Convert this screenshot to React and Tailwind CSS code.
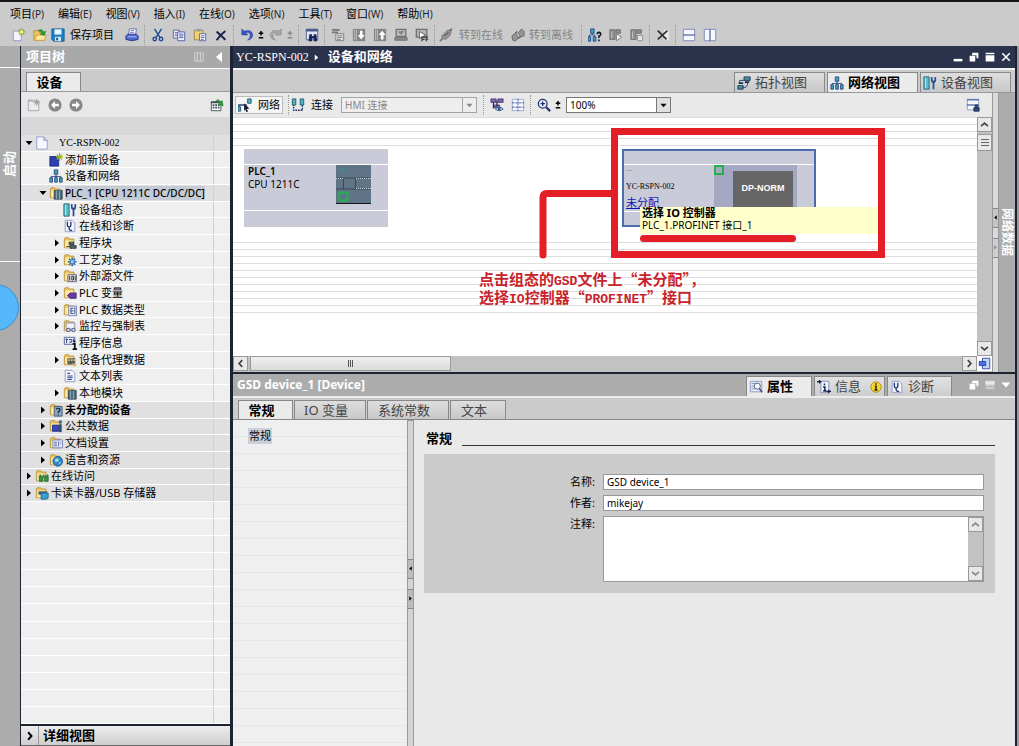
import React, { useState } from 'react';
import clsx from 'clsx';

const Folder = () => (
  <g>
    <path d="M1.5 13.5V3.5l1-1.5h4l1 1.5h5v10z" fill="#e9c25c" stroke="#b8923c" />
    <path d="M2.5 13V5h9v8z" fill="#fbe9a8" />
  </g>
);

const Sheet = () => <path d="M2.5 1.5h8l3 3v10h-11z" fill="#f4f6ff" stroke="#8a96c4" />;

const Scope = () => (
  <path d="M5 3v4q0 2 2 2t2-2V3M7 9v2q0 2 2 2h1.500" fill="none" stroke="#26356b" strokeWidth="1.500" />
);

const glyphs = {
  newProject: (
    <g>
      <path d="M1.500 3.500h9v11h-9z" fill="#f4f6ff" stroke="#8a96c4" />
      <path d="M11 0v9M6.500 4.500h9M8 1.500l6 6M14 1.500l-6 6" stroke="#8fae1d" strokeWidth="1.300" />
      <circle cx="11" cy="4.500" r="1.800" fill="#fff7a0" />
    </g>
  ),
  open: (
    <g>
      <path d="M1 14V3h5l1 2h6v9z" fill="#edc65c" stroke="#c08f2c" />
      <path d="M2 14l2-6h11l-2 6z" fill="#fde9a0" stroke="#c9a040" />
      <path d="M6 3q4-3 6 1.500l2.500-1-1.500 5-5-1.500 2.300-1Q9 3 6 3z" fill="#2c9a3a" stroke="#14702a" strokeWidth=".5" />
    </g>
  ),
  save: (
    <g>
      <path d="M1 1h14v14H3l-2-2z" fill="#1d7fc4" stroke="#155a92" />
      <path d="M4 1.500h8v6H4z" fill="#e9f4fc" />
      <path d="M4.500 10h7v5h-7z" fill="#cfe2f0" />
      <path d="M6 11h2v3H6z" fill="#1a4e80" />
    </g>
  ),
  print: (
    <g>
      <path d="M5 1h8l-1 7H4z" fill="#fff" stroke="#5a68ae" />
      <path d="M6.500 3h4M6 5h4" stroke="#5a68ae" />
      <path d="M1 9l2-2h10l2 2v4q-7 3-14 0z" fill="#4f68d0" stroke="#27398e" />
      <path d="M3 10h10" stroke="#b9c5f6" />
    </g>
  ),
  cut: (
    <g fill="none" stroke="#234a8c" strokeWidth="1.600">
      <path d="M4 1l6 9.500M12 1L6 10.500" />
      <circle cx="4.300" cy="12.500" r="2" />
      <circle cx="11.500" cy="12.500" r="2" />
    </g>
  ),
  copy: (
    <g stroke="#4a59a4">
      <path d="M1.500 2.500h7v9h-7z" fill="#fff" />
      <path d="M6.500 4.500h8v10h-8z" fill="#eef1ff" />
      <path d="M3 5h3M3 7h3M3 9h3M8 7h5M8 9h5M8 11h5" />
    </g>
  ),
  paste: (
    <g>
      <path d="M1.500 2.500h10v11h-10z" fill="#f0d070" stroke="#a5853a" />
      <path d="M4 1h5v3H4z" fill="#99a" />
      <path d="M7.500 6.500h7v8h-7z" fill="#f4f6ff" stroke="#5361a0" />
      <path d="M9 9h4M9 11h4M9 13h3" stroke="#5361a0" />
    </g>
  ),
  remove: <path d="M3 4l10 9.500M13 3.500Q7 8 3 14" fill="none" stroke="#1c2250" strokeWidth="2.300" />,
  undo: <path d="M2 1v7h7L6.500 5.500Q12 4 11.500 9q0 3-3 5 6-1 6-6.500Q13.500 1 4.500 3.500z" fill="#3a55c0" stroke="#223a96" strokeWidth=".5" />,
  redo: <path d="M14 1v7H7l2.500-2.500Q4 4 4.500 9q0 3 3 5-6-1-6-6.500Q2.500 1 11.500 3.500z" fill="#a9a9a9" stroke="#7c7c7c" strokeWidth=".6" />,
  plusminus: <path d="M1 5.500h6M4 2.500v6M1 11.500h6" stroke="currentColor" strokeWidth="2" />,
  find: (
    <g>
      <path d="M1.500 1.500h13v12h-13z" fill="#dfe4f4" stroke="#4d5a8c" />
      <path d="M1 1h14v3H1z" fill="#4d5a8c" />
      <path d="M5 7h3v2h2V7h3l1 8h-4v-3H8v3H4z" fill="#1b2858" />
    </g>
  ),
  compile: (
    <g stroke="#777">
      <path d="M1 2h9M1 5h7" strokeWidth="2" />
      <path d="M5.500 6.500h9v8h-9z" fill="#e0e0e0" />
      <path d="M7 9h6M7 11h6M7 13h4" />
    </g>
  ),
  download: (
    <g>
      <path d="M1 1h14v14H1z" fill="#858585" />
      <path d="M3 2v12M5 2v12" stroke="#c5c5c5" />
      <path d="M9 3h3v5h2.500L10.500 13 6.500 8H9z" fill="#fff" />
    </g>
  ),
  upload: (
    <g>
      <path d="M1 1h14v14H1z" fill="#858585" />
      <path d="M3 2v12M5 2v12" stroke="#c5c5c5" />
      <path d="M9 13h3V8h2.500L10.500 3l-4 5H9z" fill="#fff" />
    </g>
  ),
  simulate: (
    <g>
      <path d="M2.500 1.500h11v8h-11z" fill="#bdbdbd" stroke="#717171" strokeWidth="1.500" />
      <path d="M5 4l3 3 3-4M1 11h14v3H1z" fill="#8a8a8a" stroke="#6b6b6b" />
    </g>
  ),
  runtime: (
    <g>
      <path d="M1.500 1.500h12v9h-12z" fill="#b5b5b5" stroke="#707070" strokeWidth="1.500" />
      <path d="M5 4l7 4-7 4z" fill="#fff" stroke="#555" />
      <path d="M7 10.500h8M8 13h3M12 13h3M8 10v5M13 11v4" stroke="#444" strokeWidth="1.500" />
    </g>
  ),
  plug: (
    <g>
      <path d="M1 15l5-5" stroke="#777" strokeWidth="2" />
      <path d="M3 9l6-6 5-1-1 6-5 5-4-1z" fill="#959595" stroke="#777" />
      <path d="M12 3l3-2M6 9l5-4" stroke="#6a6a6a" strokeWidth="1.500" />
    </g>
  ),
  unplug: (
    <g>
      <path d="M1 9l4-3 4 5-4 4-3-1zM8 6l4-5 3 3v5l-4 1z" fill="#959595" stroke="#686868" />
      <path d="M5 6l2-2M8 12l3-2" stroke="#555" strokeWidth="1.500" />
    </g>
  ),
  accessible: (
    <g>
      <path d="M5 5v3M1.500 11V8h6v3" fill="none" stroke="#2c4c90" />
      <path d="M3 1h4v5H3zM0 10h3v5H0zM6 10h3v5H6z" fill="#3aa6bf" stroke="#24447e" />
      <path d="M10.500 7q0-2 2-2t2 2q0 1.500-2 2.500v2M12.500 13v2" fill="none" stroke="#10162e" strokeWidth="1.800" />
    </g>
  ),
  startCpu: (
    <g>
      <path d="M1 2h6v11H1zM8 2h5v4H8z" fill="#909090" stroke="#6c6c6c" />
      <path d="M8.500 6.500l6 4-6 4z" fill="#f0f0f0" stroke="#777" />
      <path d="M3 4v8" stroke="#c8c8c8" />
    </g>
  ),
  stopCpu: (
    <g>
      <path d="M1 2h6v11H1zM8 2h5v4H8z" fill="#909090" stroke="#6c6c6c" />
      <path d="M8.500 8.500h6v6h-6z" fill="#e4e4e4" stroke="#888" />
      <path d="M3 4v8" stroke="#c8c8c8" />
    </g>
  ),
  crossRef: (
    <g>
      <path d="M9 2h6v12H9z" fill="#e7e7e7" />
      <path d="M2 3l10 10M13 3L2 13" stroke="#333" strokeWidth="2" />
    </g>
  ),
  splitH: (
    <g>
      <path d="M1.500 1.500h13v13h-13z" fill="#f5f7ff" stroke="#7784bb" />
      <path d="M1 8h14" stroke="#5d6ba8" strokeWidth="1.500" />
    </g>
  ),
  splitV: (
    <g>
      <path d="M1.500 1.500h13v13h-13z" fill="#f5f7ff" stroke="#7784bb" />
      <path d="M8 1v14" stroke="#5d6ba8" strokeWidth="1.500" />
    </g>
  ),
  columns: <path d="M2.500 2.500h11v11h-11zM6 3v10M10 3v10" fill="none" stroke="#e2e2e2" />,
  newGrey: (
    <g>
      <path d="M1.500 3.500h12v11h-12z" fill="#ececec" stroke="#a0a0a0" />
      <path d="M1 2.500h6M11 1v8M7 5h8M8.500 2.500l5 5M13.500 2.500l-5 5" stroke="#979797" />
    </g>
  ),
  back: (
    <g>
      <circle cx="8" cy="8" r="7.500" fill="#878787" />
      <path d="M8 3.500L3.500 8 8 12.500V9.500h4.500v-3H8z" fill="#fff" />
    </g>
  ),
  forward: (
    <g>
      <circle cx="8" cy="8" r="7.500" fill="#878787" />
      <path d="M8 3.500L12.500 8 8 12.500V9.500H3.500v-3H8z" fill="#fff" />
    </g>
  ),
  overview: (
    <g>
      <path d="M1.500 4.500h11v10h-11z" fill="#fff" stroke="#3b4a55" />
      <path d="M3 8h2M6 8h2M9 8h2M3 11h2M6 11h2M9 11h2M1 5h12" stroke="#3b4a55" strokeWidth="2" />
      <path d="M6 4q3-4 6 0l2-1 1 6-6-2 2-1q-1-3-5-2z" fill="#2f9c3e" stroke="#15702a" strokeWidth=".5" />
    </g>
  ),
  project: <path d="M2 1h8l4 4v10H2zM10 1v4h4" fill="#f6f8ff" stroke="#8e9ccb" />,
  addDevice: (
    <g>
      <path d="M1 4h10v11H1z" fill="#2c3fae" stroke="#1b2a80" />
      <path d="M12 0v9M8 4.500h8M9 1.500l6 6M15 1.500l-6 6" stroke="#9fb51c" strokeWidth="1.300" />
    </g>
  ),
  network: (
    <g>
      <path d="M8 5v4M2.500 11V8.500h11V11M8 8v3" fill="none" stroke="#24447e" />
      <path d="M6 1h4v5H6zM1 10h3v5H1zM6.500 10h3v5h-3zM12 10h3v5h-3z" fill="#48a5b8" stroke="#24447e" />
    </g>
  ),
  plc: (
    <g>
      <Folder />
      <path d="M6 5h9v10H6z" fill="#4d6c7c" stroke="#2b424e" />
      <path d="M8.500 5v10M12 5v10" stroke="#8fb4bd" />
    </g>
  ),
  config: (
    <g>
      <path d="M1 1h6v14H1z" fill="#58bccb" stroke="#26606c" />
      <path d="M3 2v12" stroke="#c9eef2" />
      <path d="M9 1v4q0 2 2 3v7h2V8q2-1 2-3V1l-2 .5V5h-2V1.500z" fill="#2a4f94" />
    </g>
  ),
  diag: (
    <g>
      <Sheet />
      <Scope />
    </g>
  ),
  blocks: (
    <g>
      <Folder />
      <path d="M7 7h5v3H7zM8 11h7v3H8zM4 12h4" fill="#57636f" stroke="#2c3640" />
    </g>
  ),
  tech: (
    <g>
      <Folder />
      <path d="M10.500 5v10M5.500 10h10M7 6.500l7 7M14 6.500l-7 7" stroke="#2a6eb8" strokeWidth="1.700" />
      <circle cx="10.500" cy="10" r="2" fill="#9cc9ee" />
    </g>
  ),
  external: (
    <g>
      <Folder />
      <path d="M5.500 6.500h10v8h-10z" fill="#d6d8dd" stroke="#5c626e" />
      <path d="M7.500 8v5M10 8.500h2v4h-2zM14 8v5" fill="none" stroke="#333" />
    </g>
  ),
  tags: (
    <g>
      <Folder />
      <path d="M5 11l3-3h7v6H8z" fill="#6a3aa0" stroke="#42207a" />
    </g>
  ),
  types: (
    <g>
      <Folder />
      <path d="M6.500 3.500h9v11h-9z" fill="#eef1fb" stroke="#6e7bab" />
      <path d="M12 6H9v6h3M9 9h3M13.500 5v8" fill="none" stroke="#27376f" />
    </g>
  ),
  watch: (
    <g>
      <Folder />
      <path d="M3.500 4.500h10v7h-10z" fill="#f1f3fc" stroke="#7885b2" />
      <circle cx="6" cy="12.500" r="2" fill="#cfdcf4" stroke="#3a4a80" />
      <circle cx="12" cy="12.500" r="2" fill="#cfdcf4" stroke="#3a4a80" />
    </g>
  ),
  info: (
    <g>
      <path d="M1.500 1.500h12v8h-12z" fill="#e8ecfa" stroke="#4b5b92" />
      <path d="M3 4h3M4 3v5M7 4h3v3H7M12 3v4" fill="none" stroke="#24346e" />
      <path d="M13 5v2M11 9h2.500v5M11 15h5" stroke="#0b0f20" strokeWidth="2" fill="none" />
    </g>
  ),
  proxy: (
    <g>
      <Folder />
      <path d="M5 6h9v7H5z" fill="#555f5f" />
      <path d="M6 7h2v2H6zM9 7h2v2H9zM12 7h2v2h-2zM11 12h4v3h-4z" fill="#d8c060" />
    </g>
  ),
  textList: (
    <g>
      <Sheet />
      <path d="M5 5h3M5 8h6M5 10h6M5 12h5" stroke="#35458a" strokeWidth="1.300" />
    </g>
  ),
  unassigned: (
    <g>
      <Folder />
      <path d="M6 4h9v11H6z" fill="#8ba6bd" stroke="#40566e" />
      <path d="M8.500 7.500q0-1.500 2-1.500t2 1.500-2 3v1M10.500 13v1" fill="none" stroke="#131c38" strokeWidth="1.400" />
    </g>
  ),
  shared: (
    <g>
      <Folder />
      <path d="M4 7h7v7H4z" fill="#3a47c0" stroke="#222d88" />
      <circle cx="13" cy="3.500" r="2" fill="#3b6a8f" />
      <path d="M11.500 6h3v9h-3z" fill="#28506e" />
    </g>
  ),
  docs: (
    <g>
      <Folder />
      <path d="M4.500 4.500h11v9h-11z" fill="#eef1fb" stroke="#6e7bab" />
      <path d="M6 7h3M6 9h3M6 11h3M11 6v6M13 7h1M13 9h1" stroke="#4050a0" />
    </g>
  ),
  languages: (
    <g>
      <Folder />
      <circle cx="10" cy="9.500" r="5.500" fill="#2f87c8" stroke="#195a90" />
      <path d="M7 7q3-2 4 0t-2 3-2-3M11 11l3-1-2 3z" fill="#a5d8f0" />
    </g>
  ),
  online: (
    <g>
      <Folder />
      <path d="M4 8h12M6 6v4M10 6v4M14 6v4" stroke="#1d6a2c" />
      <path d="M5 9h4v5H5zM11 9h4v5h-4z" fill="#3b9a48" stroke="#1d6a2c" />
    </g>
  ),
  reader: (
    <g>
      <Folder />
      <path d="M4 6h10v4H4z" fill="#49606f" />
      <path d="M7 8h8v6l-2 1H7z" fill="#38a0d8" stroke="#1b658e" />
    </g>
  ),
  netMode: (
    <g>
      <path d="M1 13V8h9" fill="none" stroke="#24447e" strokeWidth="1.500" />
      <path d="M11 1h4v5h-4zM0 10h3v5H0z" fill="#4db3c2" stroke="#24546e" />
      <path d="M7 6l6 6-3 .5 1.500 3-2 .5-1-3-1.500 1.500z" fill="#151c30" />
    </g>
  ),
  connect: (
    <g>
      <path d="M3 7v7h10V7" fill="none" stroke="#24346e" strokeWidth="1.600" strokeDasharray="2 1" />
      <path d="M1.500 1h4v7h-4zM10.500 1h4v7h-4z" fill="#4db3c2" stroke="#24546e" />
    </g>
  ),
  highlight: (
    <g>
      <path d="M1 1h6v4H1zM9 1h6v4H9zM5 8h6v3H5z" fill="#7a63a8" stroke="#53407e" />
      <path d="M4 5v7M8 3v6" stroke="#2d2750" strokeWidth="1.500" />
      <path d="M6 12.500q4.500-4 9 0-4.500 4-9 0z" fill="#cfe2f6" stroke="#294a86" />
      <circle cx="10.500" cy="12.500" r="1.500" fill="#294a86" />
    </g>
  ),
  gridView: (
    <g>
      <path d="M1.500 1.500h13v13h-13z" fill="#f5f7ff" stroke="#9aa5d0" />
      <path d="M8 1v14M1 5.500h14M1 10.500h14" stroke="#3f5090" strokeDasharray="3 1" />
    </g>
  ),
  zoomIn: (
    <g fill="none" stroke="#26336b">
      <circle cx="6.500" cy="6.500" r="5" fill="#e6ecfa" strokeWidth="1.500" />
      <path d="M4 6.500h5M6.500 4v5" strokeWidth="1.500" />
      <path d="M10.500 10.500l4.500 4.500" strokeWidth="2.500" />
    </g>
  ),
  topology: (
    <g>
      <path d="M3 9V5h5M4 13h5q3 0 3-5" fill="none" stroke="#24346e" />
      <path d="M8 1h7v4H8zM1 11h6v4H1z" fill="#4a8ea5" stroke="#1c3350" />
      <path d="M2 8h5M9 7h5" stroke="#1c3350" strokeWidth="2" />
    </g>
  ),
  saveLayout: (
    <g>
      <path d="M1.500 1.500h13v12h-13z" fill="#f5f7ff" stroke="#8b97bf" />
      <path d="M1 2h14M1 8h14" stroke="#5c78b0" strokeWidth="1.500" />
      <path d="M9 11h6v4H9zM10.500 11V8h3v3" fill="#2c4a78" stroke="#1e3458" />
    </g>
  ),
  properties: (
    <g>
      <path d="M1.500 1.500h13v12h-13z" fill="#e4e9f6" stroke="#8a96bf" />
      <path d="M3 4h4M3 7h3M3 10h4" stroke="#8190bd" />
      <circle cx="9.500" cy="7" r="3.500" fill="#f6f9ff" stroke="#45547e" />
      <path d="M12 10l3 4" stroke="#45547e" strokeWidth="2" />
    </g>
  ),
  infoTab: (
    <g>
      <path d="M4.500 1.500h9v13h-9z" fill="#f1f4ff" stroke="#7b88b5" />
      <path d="M0 2h5M3 0v4M11 13h5M13.500 11v4" stroke="#151e48" strokeWidth="1.500" />
      <path d="M8.500 4v2M7 8h2v4M7 12.500h4" fill="none" stroke="#151e48" strokeWidth="1.700" />
    </g>
  ),
  navigator: (
    <g>
      <path d="M5.500 1.500h9v13h-9z" fill="#c5d3f8" stroke="#1f3a9c" />
      <path d="M1.500 5.500h8v5h-8z" fill="#4a74e8" stroke="#1f3a9c" />
    </g>
  ),
  caretUp: <path d="M3 10.500l5-4.500 5 4.500" fill="none" stroke="currentColor" strokeWidth="2.500" />,
  caretDown: <path d="M3 5.500L8 10l5-4.500" fill="none" stroke="currentColor" strokeWidth="2.500" />,
  caretLeft: <path d="M10.500 3L6 8l4.500 5" fill="none" stroke="currentColor" strokeWidth="2.500" />,
  caretRight: <path d="M5.500 3L10 8l-4.500 5" fill="none" stroke="currentColor" strokeWidth="2.500" />,
  solidLeft: <path d="M12 1v14L4 8z" fill="currentColor" />,
  solidRight: <path d="M4 1v14l8-7z" fill="currentColor" />,
  solidDown: <path d="M1 4h14l-7 8z" fill="currentColor" />,
  minimize: <path d="M1 11h14v4H1z" fill="#fff" />,
  restore: <path d="M5 1h10v9h-3V5H5zM1 6h9v9H1z" fill="#fff" />,
  maximize: <path d="M1 1h14v2.500H1zM1 5h14v10H1z" fill="#fff" />,
  close: <path d="M2 2l12 12M14 2L2 14" stroke="#fff" strokeWidth="2.500" />,
  dock: <path d="M1 2h14v5H1zM1 9h14M1 12h14M1 14h14" fill="#e8e8e8" stroke="#e8e8e8" />
};

const Icon = ({ name, className = 'size-[14px]' }) => (
  <svg viewBox={name === 'plusminus' ? '0 0 8 16' : '0 0 16 16'} className={clsx('shrink-0', className)} aria-hidden="true">
    {glyphs[name]}
  </svg>
);

const menus = [
  ['项目', 'P'], ['编辑', 'E'], ['视图', 'V'], ['插入', 'I'], ['在线', 'O'],
  ['选项', 'N'], ['工具', 'T'], ['窗口', 'W'], ['帮助', 'H']
];

const tree = [
  { text: 'YC-RSPN-002', icon: 'project', depth: 0, open: true, grey: true, serif: true },
  { text: '添加新设备', icon: 'addDevice', depth: 1 },
  { text: '设备和网络', icon: 'network', depth: 1 },
  { text: 'PLC_1 [CPU 1211C DC/DC/DC]', icon: 'plc', depth: 1, open: true, grey: true, selected: true },
  { text: '设备组态', icon: 'config', depth: 2 },
  { text: '在线和诊断', icon: 'diag', depth: 2 },
  { text: '程序块', icon: 'blocks', depth: 2, open: false },
  { text: '工艺对象', icon: 'tech', depth: 2, open: false },
  { text: '外部源文件', icon: 'external', depth: 2, open: false },
  { text: 'PLC 变量', icon: 'tags', depth: 2, open: false },
  { text: 'PLC 数据类型', icon: 'types', depth: 2, open: false },
  { text: '监控与强制表', icon: 'watch', depth: 2, open: false },
  { text: '程序信息', icon: 'info', depth: 2 },
  { text: '设备代理数据', icon: 'proxy', depth: 2, open: false },
  { text: '文本列表', icon: 'textList', depth: 2 },
  { text: '本地模块', icon: 'plc', depth: 2, open: false },
  { text: '未分配的设备', icon: 'unassigned', depth: 1, open: false, grey: true, bold: true },
  { text: '公共数据', icon: 'shared', depth: 1, open: false, grey: true },
  { text: '文档设置', icon: 'docs', depth: 1, open: false, grey: true },
  { text: '语言和资源', icon: 'languages', depth: 1, open: false, grey: true },
  { text: '在线访问', icon: 'online', depth: 0, open: false, grey: true },
  { text: '卡读卡器/USB 存储器', icon: 'reader', depth: 0, open: false, grey: true }
];

const indents = ['pl-[3px]', 'pl-[17px]', 'pl-[31px]'];

const Tool = ({ name, label, narrow }) => (
  <button
    aria-label={label}
    className={clsx('flex h-5 shrink-0 items-center justify-center', narrow ? 'w-2' : 'w-[21px]')}
  >
    <Icon name={name} className={narrow ? 'h-3 w-2' : 'size-[14px]'} />
  </button>
);

const Sep = () => <span className="mx-0.5 h-5 w-px shrink-0 border-l border-dotted border-[#999]" />;

const Toolbar = () => (
  <div className="flex h-[22px] shrink-0 items-center pl-2 text-[11px]">
    <Tool name="newProject" label="新建项目" />
    <Tool name="open" label="打开项目" />
    <button className="flex h-5 shrink-0 items-center gap-[5px] pl-px">
      <Icon name="save" />
      保存项目
    </button>
    <span className="w-[7px]" />
    <Tool name="print" label="打印" />
    <Sep />
    <Tool name="cut" label="剪切" />
    <Tool name="copy" label="复制" />
    <Tool name="paste" label="粘贴" />
    <Tool name="remove" label="删除" />
    <Sep />
    <Tool name="undo" label="撤消" />
    <Tool name="plusminus" label="撤消列表" narrow />
    <span className="flex text-[#888]">
      <Tool name="redo" label="重做" />
      <Tool name="plusminus" label="重做列表" narrow />
    </span>
    <span className="w-0.5" />
    <Sep />
    <Tool name="find" label="查找" />
    <Sep />
    <Tool name="compile" label="编译" />
    <Tool name="download" label="下载" />
    <Tool name="upload" label="上传" />
    <Tool name="simulate" label="仿真" />
    <Tool name="runtime" label="运行系统" />
    <Sep />
    <button className="flex h-5 shrink-0 items-center gap-1.5 pl-0.5 text-[#858585]">
      <Icon name="plug" />
      转到在线
    </button>
    <button className="flex h-5 shrink-0 items-center gap-1 pl-2 text-[#858585]">
      <Icon name="unplug" />
      转到离线
    </button>
    <span className="w-1.5" />
    <Sep />
    <Tool name="accessible" label="可访问的设备" />
    <Tool name="startCpu" label="启动 CPU" />
    <Tool name="stopCpu" label="停止 CPU" />
    <Sep />
    <Tool name="crossRef" label="交叉引用" />
    <Sep />
    <Tool name="splitH" label="水平拆分" />
    <Tool name="splitV" label="垂直拆分" />
  </div>
);

const TreeRow = ({ item }) => (
  <li className={clsx('flex items-center border-b border-white', item.grey ? 'bg-[#e0e0e0]' : 'bg-[#efefef]')}>
    <button className={clsx('flex h-full flex-1 items-center', indents[item.depth])}>
      <span className="flex w-[10px] shrink-0 justify-center">
        {item.open !== undefined && <Icon name={item.open ? 'solidDown' : 'solidRight'} className="size-2" />}
      </span>
      <Icon name={item.icon} className="ml-px size-[14px]" />
      <span
        className={clsx(
          'whitespace-nowrap leading-[14px]',
          item.serif ? "ml-[10px] font-['Liberation_Serif',serif] text-[10px]" : 'ml-0.5',
          item.bold && 'font-bold',
          item.selected && 'bg-[#c5cbd5] text-[10px] font-medium'
        )}
      >
        {item.text}
      </span>
    </button>
    <span className="h-full w-[17px] shrink-0 border-l border-[#cfcfcf]" />
  </li>
);

const ProjectTree = () => (
  <aside className="flex w-[213px] shrink-0 flex-col border-l border-r-[3px] border-[#1c2433] bg-[#cbcbcb]">
    <header className="flex h-[22px] shrink-0 items-center bg-[#a9a9a9] px-[5px] text-[13px] font-bold text-white">
      项目树
      <Icon name="columns" className="ml-auto size-3" />
      <Icon name="solidLeft" className="ml-2 size-3" />
    </header>
    <div className="flex h-6 shrink-0 items-end border-y border-t-white border-b-[#999] px-[5px]">
      <button className="h-[19px] w-[55px] border border-b-0 border-[#888] bg-[#ebebeb] pr-2 text-[13px] leading-[18px] font-bold">
        设备
      </button>
    </div>
    <div className="flex h-[25px] shrink-0 items-center gap-[7px] bg-[#e8e8e8] px-1.5">
      <Icon name="newGrey" />
      <Icon name="back" />
      <Icon name="forward" />
      <Icon name="overview" className="ml-auto size-[14px]" />
    </div>
    <div className="h-[18px] shrink-0 bg-[#d8d8d8]" />
    <ul className="grid h-[367px] shrink-0 auto-rows-fr text-[11px]">
      {tree.map((item) => (
        <TreeRow key={item.text} item={item} />
      ))}
    </ul>
    <div className="flex min-h-0 flex-1 flex-col">
      {Array.from({ length: 13 }, (_, i) => (
        <div key={i} className="flex flex-1 border-b border-white bg-[#efefef]">
          <span className="ml-auto w-[17px] border-l border-[#cfcfcf]" />
        </div>
      ))}
    </div>
    <button className="flex h-[22px] shrink-0 items-center border-t-2 border-b border-t-[#1c2433] border-b-[#666] bg-linear-to-b from-[#ececec] to-[#cfcfcf] text-[13px] font-bold">
      <span className="flex h-full w-[18px] items-center justify-center border-r border-[#999]">
        <Icon name="caretRight" className="size-3" />
      </span>
      <span className="pl-1">详细视图</span>
    </button>
  </aside>
);

const ViewTab = ({ icon, text, active, onClick }) => (
  <button
    onClick={onClick}
    className={clsx(
      'flex h-5 w-[91px] items-center gap-1 border border-b-0 border-[#888] px-0.5 text-[13px]',
      active ? 'bg-[#ebebeb] font-bold' : 'bg-linear-to-b from-[#dedede] to-[#c8c8c8] text-[#444]'
    )}
  >
    <Icon name={icon} />
    {text}
  </button>
);

const ScrollButton = ({ icon, label, light }) => (
  <button
    aria-label={label}
    className={clsx(
      'flex size-[15px] shrink-0 items-center justify-center border border-[#999] bg-[#e8e8e8]',
      light ? 'text-[#888]' : 'text-[#444]'
    )}
  >
    <Icon name={icon} className="size-[11px]" />
  </button>
);

const PlcNode = () => (
  <div className="absolute top-8 left-[11px] flex h-[78px] w-36 flex-col bg-[#c9cbd9] text-[10px] leading-[13px]">
    <div className="h-4 border-b border-white" />
    <div className="flex flex-1 justify-between border-b border-white pr-[17px] pl-1">
      <div>
        <p className="font-semibold">PLC_1</p>
        <p>CPU 1211C</p>
      </div>
      <svg viewBox="0 0 35 39" className="h-[39px] w-[35px]">
        <path d="M0 0h35v39H0z" fill="#5f7486" />
        <path d="M0 13h35M0 24h35M7.500 13v11M19.500 13v11" stroke="#374854" />
        <path d="M20 13.500h15M20 23.500h15M0 13.500h7" stroke="#ccd6dc" strokeDasharray="1 1" />
        <path d="M4 5h6" stroke="#2aa0a0" />
        <path d="M3.500 27.500h8v8h-8z" fill="#5f7486" stroke="#22b14c" strokeWidth="2" />
        <path d="M0 38.500h35" stroke="#10161c" />
      </svg>
    </div>
    <div className="h-4" />
  </div>
);

const GsdNode = () => (
  <div className="absolute top-8 left-[389px] flex h-[78px] w-[194px] flex-col border-2 border-[#4c6cae] bg-[#c9cbd9]">
    <div className="h-[14px] border-b border-white" />
    <div className="flex flex-1 justify-between border-b border-white pr-[17px] pl-0.5">
      <div className="flex flex-col">
        <span className="h-4 text-[8px] leading-[6px] text-[#777]">...</span>
        <span className="font-['Liberation_Serif',serif] text-[8px] leading-[12px]">YC-RSPN-002</span>
        <a href="#controller" className="mt-0.5 text-[11px] leading-4 text-[#1414b4] underline">未分配</a>
      </div>
      <div className="flex w-[83px] bg-[#a4a8c2]">
        <span className="size-[10px] border-2 border-[#22b14c]" />
        <span className="mt-1.5 ml-[9px] flex h-9 w-[60px] items-center justify-center bg-[#666] font-['Liberation_Sans',sans-serif] text-[9px] font-bold text-white">
          DP-NORM
        </span>
      </div>
    </div>
    <div className="h-[14px]" />
  </div>
);

const Canvas = () => (
  <div className="relative min-w-0 flex-1 overflow-hidden bg-white">
    <div className="h-[29px] bg-[repeating-linear-gradient(to_bottom,#dedede_0px_1px,#ffffff_1px_7px)]" />
    <div className="mt-24 h-[71px] bg-[repeating-linear-gradient(to_bottom,#dedede_0px_1px,#ffffff_1px_7px)]" />
    <PlcNode />
    <GsdNode />
    <div role="tooltip" className="absolute top-[90px] left-[407px] h-[27px] w-[238px] bg-[#ffffcc] pl-0.5 text-[11px] leading-[12px]">
      <p className="font-bold">选择 IO 控制器</p>
      <p className="text-[10px]">PLC_1.PROFINET 接口_1</p>
    </div>
    <div className="absolute top-[118px] left-[407px] h-[7px] w-[156px] rounded-full bg-[#e31e26]" />
    <div className="absolute top-[11px] left-[378px] h-[130px] w-[274px] border-[7px] border-[#e31e26]" />
    <svg viewBox="0 0 74 72" className="absolute top-[72px] left-[306px] h-[72px] w-[74px]">
      <path d="M74 4.500H8q-4 0-4 4V66" fill="none" stroke="#e31e26" strokeWidth="7" strokeLinecap="round" />
    </svg>
    <p className="absolute top-[153px] left-[246px] font-['Noto_Sans_CJK_SC',sans-serif] text-[15px] leading-[18px] font-bold whitespace-nowrap text-[#c8232b]">
      <span className="block h-[18px]">
        点击组态的<span className="font-['Liberation_Mono',monospace] text-[13px] leading-none">GSD</span>文件上“未分配”，
      </span>
      <span className="block h-[18px]">
        选择<span className="font-['Liberation_Mono',monospace] text-[13px] leading-none">IO</span>控制器“
        <span className="font-['Liberation_Mono',monospace] text-[13px] leading-none">PROFINET</span>”接口
      </span>
    </p>
  </div>
);

const NetworkEditor = () => {
  const [view, setView] = useState('网络视图');
  const [zoom, setZoom] = useState('100%');

  return (
    <section className="flex shrink-0 flex-col">
      <header className="flex h-[22px] items-center bg-[#2b334c] pr-1 pl-[3px] text-[13px] font-bold text-white">
        <span className="font-['Liberation_Serif',serif] text-[12px] font-normal">YC-RSPN-002</span>
        <Icon name="solidRight" className="mr-2 ml-1 size-[7px]" />
        设备和网络
        <div className="ml-auto flex gap-1.5">
          <button aria-label="最小化"><Icon name="minimize" className="size-[10px]" /></button>
          <button aria-label="还原"><Icon name="restore" className="size-[10px]" /></button>
          <button aria-label="最大化"><Icon name="maximize" className="size-[10px]" /></button>
          <button aria-label="关闭"><Icon name="close" className="size-[10px]" /></button>
        </div>
      </header>
      <div className="flex h-[25px] items-end justify-end gap-0.5 border-t-2 border-b border-t-[#f2f2f2] border-b-[#999] bg-[#cbcbcb] pr-1">
        <ViewTab icon="topology" text="拓扑视图" active={view === '拓扑视图'} onClick={() => setView('拓扑视图')} />
        <ViewTab icon="network" text="网络视图" active={view === '网络视图'} onClick={() => setView('网络视图')} />
        <ViewTab icon="config" text="设备视图" active={view === '设备视图'} onClick={() => setView('设备视图')} />
      </div>
      <div className="flex">
        <div className="flex min-w-0 flex-1 flex-col">
          <div className="flex h-6 items-center bg-[#e9e9e9] pr-3 pl-0.5 text-[11px]">
            <button className="flex h-[18px] items-center gap-1.5 border border-[#bbb] bg-[#f5f5f5] px-0.5">
              <Icon name="netMode" />
              网络
            </button>
            <span className="w-[3px]" />
            <Sep />
            <button className="flex items-center gap-1.5">
              <Icon name="connect" />
              连接
            </button>
            <label className="relative ml-2 flex items-center">
              <select
                disabled
                aria-label="连接类型"
                className="h-4 w-[136px] appearance-none border border-[#a5a5a5] bg-[#eee] pl-[3px] text-[10px] leading-[14px] text-[#888]"
              >
                <option>HMI 连接</option>
              </select>
              <span className="pointer-events-none absolute right-0 flex h-4 w-[15px] items-center justify-center border border-[#a5a5a5] text-[#888]">
                <Icon name="solidDown" className="size-[7px]" />
              </span>
            </label>
            <span className="w-1" />
            <Sep />
            <Tool name="highlight" label="突出显示" />
            <Tool name="gridView" label="网格" />
            <Sep />
            <Tool name="zoomIn" label="放大" />
            <Tool name="plusminus" label="缩放选项" narrow />
            <label className="relative ml-1 flex items-center">
              <select
                aria-label="缩放"
                value={zoom}
                onChange={(e) => setZoom(e.target.value)}
                className="h-4 w-[105px] appearance-none border border-[#777] bg-white pl-[3px] text-[10px] leading-[14px]"
              >
                <option>100%</option>
                <option>200%</option>
              </select>
              <span className="pointer-events-none absolute right-0 flex h-4 w-[15px] items-center justify-center border border-[#777] bg-[#e0e0e0]">
                <Icon name="solidDown" className="size-[7px]" />
              </span>
            </label>
            <span className="ml-auto flex"><Icon name="saveLayout" /></span>
          </div>
          <div className="flex h-[239px]">
            <Canvas />
            <div className="flex w-[15px] shrink-0 flex-col bg-[#c2c2c2]">
              <ScrollButton icon="caretUp" label="向上滚动" />
              <div className="mt-0.5 flex h-[17px] flex-col items-center justify-center gap-0.5 border border-[#999] bg-[#e8e8e8]">
                <span className="h-px w-2 bg-[#666]" />
                <span className="h-px w-2 bg-[#666]" />
                <span className="h-px w-2 bg-[#666]" />
              </div>
              <div className="flex-1" />
              <ScrollButton icon="caretDown" label="向下滚动" />
            </div>
          </div>
          <div className="flex h-4 bg-[#c2c2c2]">
            <ScrollButton icon="caretLeft" label="向左滚动" />
            <div className="ml-0.5 flex h-[15px] w-[201px] items-center justify-center gap-px border border-[#999] bg-linear-to-b from-[#f0f0f0] to-[#dadada]">
              <span className="h-[7px] w-px bg-[#555]" />
              <span className="h-[7px] w-px bg-[#555]" />
              <span className="h-[7px] w-px bg-[#555]" />
            </div>
            <div className="flex-1" />
            <ScrollButton icon="caretRight" label="向右滚动" />
            <button aria-label="导航" className="flex size-[15px] items-center justify-center bg-white">
              <Icon name="navigator" className="size-[13px]" />
            </button>
          </div>
        </div>
        <div className="flex w-[7px] shrink-0 flex-col justify-center border-x border-[#999] bg-[#dadada]">
          <span className="flex h-5 items-center justify-center border-y border-[#888] bg-[#c4c4c4]">
            <Icon name="solidLeft" className="size-[5px]" />
          </span>
          <span className="h-[10px]" />
          <span className="flex h-5 items-center justify-center border-y border-[#888] bg-[#cfcfcf] text-[#888]">
            <Icon name="solidRight" className="size-[5px]" />
          </span>
        </div>
        <button className="flex w-4 shrink-0 items-center justify-center bg-[#acacac] text-[12px] font-bold text-white">
          <span className="[writing-mode:sideways-rl]">网络数据</span>
        </button>
      </div>
    </section>
  );
};

const InspectorTab = ({ icon, text, active, badge, className }) => (
  <button
    className={clsx(
      'flex h-5 items-center gap-1 border border-b-0 border-[#888] px-0.5 text-[13px]',
      active ? 'bg-[#ebebeb] font-bold' : 'bg-linear-to-b from-[#e2e2e2] to-[#cdcdcd] text-[#444]',
      className
    )}
  >
    <Icon name={icon} />
    {text}
    {badge && (
      <svg viewBox="0 0 16 16" className="ml-auto size-3">
        <circle cx="8" cy="8" r="7" fill="#f4d52c" stroke="#a08310" />
        <path d="M8 3v2M6.500 7H8v5M6 12h4" stroke="#222" strokeWidth="2" fill="none" />
      </svg>
    )}
  </button>
);

const pageTabs = [
  { text: '常规', width: 'w-[55px]' },
  { text: 'IO 变量', width: 'w-[72px]' },
  { text: '系统常数', width: 'w-[82px]' },
  { text: '文本', width: 'w-14' }
];

const Inspector = () => {
  const [tab, setTab] = useState('常规');

  return (
    <section className="flex min-h-0 flex-1 flex-col border-t-2 border-[#1c2433]">
      <header className="flex h-[22px] shrink-0 items-end bg-[#acacac] pr-1 pl-1 text-[12px] font-bold text-white">
        <span className="self-center">GSD device_1 [Device]</span>
        <div className="ml-auto flex gap-0.5 font-normal text-black">
          <InspectorTab icon="properties" text="属性" active className="w-[66px]" />
          <InspectorTab icon="infoTab" text="信息" badge className="w-[71px]" />
          <InspectorTab icon="diag" text="诊断" className="w-[65px]" />
        </div>
        <div className="ml-[17px] flex gap-1.5 self-center">
          <Icon name="restore" className="size-[10px]" />
          <Icon name="dock" className="size-[10px]" />
          <Icon name="solidDown" className="size-[10px]" />
        </div>
      </header>
      <div className="flex h-6 shrink-0 items-end border-t-2 border-b border-t-[#ececec] border-b-[#888] bg-[#cbcbcb] pl-[5px]">
        {pageTabs.map(({ text, width }) => (
          <button
            key={text}
            onClick={() => setTab(text)}
            className={clsx(
              'mr-px h-[19px] border border-b-0 border-[#888] pr-2 text-[13px] leading-[18px]',
              width,
              tab === text ? 'bg-[#ebebeb] font-bold' : 'bg-linear-to-b from-[#dedede] to-[#c8c8c8] text-[#444]'
            )}
          >
            {text}
          </button>
        ))}
      </div>
      <div className="flex min-h-0 flex-1">
        <nav className="w-[174px] shrink-0 bg-[repeating-linear-gradient(to_bottom,#efefef_0px_16px,#e6e6e6_16px_17px)] pt-0.5 pl-[15px]">
          <a href="#general" className="inline-block bg-[#c9d0dc] px-px text-[11px] leading-4">常规</a>
        </nav>
        <div className="flex w-[7px] shrink-0 flex-col justify-center border border-b-0 border-[#999] bg-[#d4d4d4]">
          <span className="flex h-5 items-center justify-center border-y border-[#888] bg-[#bcbcbc]">
            <Icon name="solidLeft" className="size-[5px]" />
          </span>
          <span className="h-[10px]" />
          <span className="flex h-5 items-center justify-center border-y border-[#888] bg-[#bcbcbc]">
            <Icon name="solidRight" className="size-[5px]" />
          </span>
        </div>
        <form className="min-w-0 flex-1 bg-[#e9e9e9] pr-5 pl-[10px]">
          <div className="flex h-[34px] items-center gap-[10px] pt-1 pl-0.5">
            <h2 className="text-[13px] font-bold">常规</h2>
            <span className="mt-3 h-px flex-1 bg-[#333]" />
          </div>
          <div className="grid grid-cols-[auto_381px] justify-end gap-x-2 gap-y-[5px] bg-[#cbcbcb] pt-5 pr-[11px] pb-[11px] text-[11px] leading-4">
            <label htmlFor="name">名称:</label>
            <input id="name" defaultValue="GSD device_1" className="h-4 border border-[#999] bg-white px-[3px] text-[10px]" />
            <label htmlFor="author">作者:</label>
            <input id="author" defaultValue="mikejay" className="h-4 border border-[#999] bg-white px-[3px] text-[10px]" />
            <label htmlFor="comment">注释:</label>
            <div className="flex h-[66px] border border-[#999] bg-white">
              <textarea id="comment" className="min-w-0 flex-1 resize-none px-[3px] text-[10px] outline-none" />
              <div className="flex flex-col justify-between bg-[#c2c2c2]">
                <ScrollButton icon="caretUp" label="注释向上滚动" light />
                <ScrollButton icon="caretDown" label="注释向下滚动" light />
              </div>
            </div>
          </div>
        </form>
      </div>
    </section>
  );
};

const App = () => (
  <div className="flex h-screen flex-col overflow-hidden border-t-2 border-[#151515] bg-[#cbcbcb] font-['Noto_Sans','Noto_Sans_CJK_SC',sans-serif] text-black">
    <nav className="flex h-[22px] shrink-0 items-center gap-[14px] pt-0.5 pl-[10px] text-[11px]">
      {menus.map(([text, key]) => (
        <button key={text} className="whitespace-nowrap">
          {text}
          <span className="text-[10px] text-[#222]">({key})</span>
        </button>
      ))}
    </nav>
    <Toolbar />
    <div className="flex min-h-0 flex-1">
      <div className="relative flex w-5 shrink-0 flex-col overflow-hidden bg-[#acacac]">
        <div className="h-[22px] shrink-0 border-b border-white" />
        <button className="flex h-[194px] shrink-0 items-center justify-center border-b border-white text-[13px] font-bold text-white">
          <span className="[writing-mode:sideways-lr]">启动</span>
        </button>
        <span className="absolute top-[238px] -left-7 size-[47px] rounded-full border border-[#3b8fd0] bg-[#55b8fa]" />
      </div>
      <ProjectTree />
      <main className="flex min-w-0 flex-1 flex-col border-r-2 border-[#1c2433]">
        <NetworkEditor />
        <Inspector />
      </main>
      <div className="w-0.5 shrink-0 bg-[#999]" />
    </div>
  </div>
);

export default App;
